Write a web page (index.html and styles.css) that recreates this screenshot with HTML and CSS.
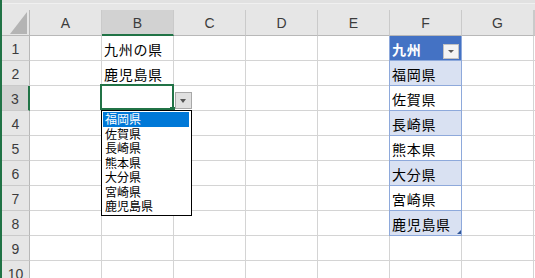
FILE: index.html
```html
<!DOCTYPE html>
<html lang="ja">
<head>
    <meta charset="utf-8">
    <title>九州の県</title>
    <link rel="stylesheet" href="styles.css">
</head>
<body>

<div class="window">
    <div class="edge"></div>
    <div class="sheet">
        <div class="topbar"></div>
        <div class="grid">
            <!-- column headers -->
            <div class="corner">
                <svg width="17" height="22" viewBox="0 0 17 22"><polygon points="17,0 17,22 0,22" fill="#b4b4b4"/></svg>
            </div>
            <div class="colhead">A</div>
            <div class="colhead sel">B</div>
            <div class="colhead">C</div>
            <div class="colhead">D</div>
            <div class="colhead">E</div>
            <div class="colhead">F</div>
            <div class="colhead">G</div>
            <div class="colhead"></div>

            <!-- row 1 -->
            <div class="rowhead">1</div>
            <div class="c"></div>
            <div class="c">九州の県</div>
            <div class="c"></div>
            <div class="c"></div>
            <div class="c"></div>
            <div class="c tbl tblhead">九州<span class="filter"></span></div>
            <div class="c"></div>
            <div class="c"></div>

            <!-- row 2 -->
            <div class="rowhead">2</div>
            <div class="c"></div>
            <div class="c">鹿児島県</div>
            <div class="c"></div>
            <div class="c"></div>
            <div class="c"></div>
            <div class="c tbl band">福岡県</div>
            <div class="c"></div>
            <div class="c"></div>

            <!-- row 3 -->
            <div class="rowhead sel">3</div>
            <div class="c"></div>
            <div class="c active">
                <span class="handle"></span>
                <span class="ddbtn"></span>
                <ul class="ddlist">
                    <li class="on">福岡県</li>
                    <li>佐賀県</li>
                    <li>長崎県</li>
                    <li>熊本県</li>
                    <li>大分県</li>
                    <li>宮崎県</li>
                    <li>鹿児島県</li>
                </ul>
            </div>
            <div class="c"></div>
            <div class="c"></div>
            <div class="c"></div>
            <div class="c tbl">佐賀県</div>
            <div class="c"></div>
            <div class="c"></div>

            <!-- row 4 -->
            <div class="rowhead">4</div>
            <div class="c"></div>
            <div class="c"></div>
            <div class="c"></div>
            <div class="c"></div>
            <div class="c"></div>
            <div class="c tbl band">長崎県</div>
            <div class="c"></div>
            <div class="c"></div>

            <!-- row 5 -->
            <div class="rowhead">5</div>
            <div class="c"></div>
            <div class="c"></div>
            <div class="c"></div>
            <div class="c"></div>
            <div class="c"></div>
            <div class="c tbl">熊本県</div>
            <div class="c"></div>
            <div class="c"></div>

            <!-- row 6 -->
            <div class="rowhead">6</div>
            <div class="c"></div>
            <div class="c"></div>
            <div class="c"></div>
            <div class="c"></div>
            <div class="c"></div>
            <div class="c tbl band">大分県</div>
            <div class="c"></div>
            <div class="c"></div>

            <!-- row 7 -->
            <div class="rowhead">7</div>
            <div class="c"></div>
            <div class="c"></div>
            <div class="c"></div>
            <div class="c"></div>
            <div class="c"></div>
            <div class="c tbl">宮崎県</div>
            <div class="c"></div>
            <div class="c"></div>

            <!-- row 8 -->
            <div class="rowhead">8</div>
            <div class="c"></div>
            <div class="c"></div>
            <div class="c"></div>
            <div class="c"></div>
            <div class="c"></div>
            <div class="c tbl band last">鹿児島県</div>
            <div class="c"></div>
            <div class="c"></div>

            <!-- row 9 -->
            <div class="rowhead">9</div>
            <div class="c"></div>
            <div class="c"></div>
            <div class="c"></div>
            <div class="c"></div>
            <div class="c"></div>
            <div class="c"></div>
            <div class="c"></div>
            <div class="c"></div>

            <!-- row 10 -->
            <div class="rowhead">10</div>
            <div class="c"></div>
            <div class="c"></div>
            <div class="c"></div>
            <div class="c"></div>
            <div class="c"></div>
            <div class="c"></div>
            <div class="c"></div>
            <div class="c"></div>
        </div>
    </div>
</div>

</body>
</html>
```

FILE: styles.css
```css
html, body{
    margin:0;
    padding:0;
    overflow:hidden;
    background:#fff;
}
.window{
    display:flex;
    width:535px;
    height:278px;
    overflow:hidden;
}
.edge{
    width:2px;
    flex:none;
    background:#217346;
}
.sheet{
    flex:1;
    min-width:0;
}
.topbar{
    height:10px;
    background:linear-gradient(#e1e1e1 0 3px, #f0f0f0 3px 4px, #e6e6e6 4px);
}
.grid{
    display:grid;
    grid-template-columns:28px repeat(7, 72px) minmax(0, 1fr);
    grid-template-rows:26px repeat(10, 25px);
}

/* headers */
.corner, .colhead, .rowhead{
    box-sizing:border-box;
    background:#e6e6e6;
    font:14px "Liberation Sans", Arial, sans-serif;
    color:#3c3c3c;
    display:flex;
    align-items:center;
    justify-content:center;
}
.corner{
    border-right:1px solid #b8b8b8;
    border-bottom:1px solid #b8b8b8;
    align-items:flex-end;
    justify-content:flex-end;
    padding:0 2px 1px 0;
}
.colhead{
    border-right:1px solid #cacaca;
    border-bottom:1px solid #b8b8b8;
    padding-top:1px;
}
.colhead.sel{
    background:#d2d2d2;
    border-bottom:2px solid #217346;
}
.rowhead{
    border-right:1px solid #b8b8b8;
    border-bottom:1px solid #cacaca;
    padding-top:1px;
}
.rowhead.sel{
    background:#d2d2d2;
    border-right:2px solid #217346;
}

/* cells */
.c{
    box-sizing:border-box;
    border-right:1px solid #d4d4d4;
    border-bottom:1px solid #d4d4d4;
    font:14px "Noto Sans CJK JP", sans-serif;
    letter-spacing:0.7px;
    color:#000;
    padding:1px 0 0 2px;
    display:flex;
    align-items:center;
    white-space:nowrap;
}

/* table in column F */
.tbl{
    border-right-color:#8ea9db;
    border-bottom-color:#8ea9db;
    box-shadow:-1px 0 0 #8ea9db;
}
.tbl.band{
    background:#d9e1f2;
}
.tblhead{
    position:relative;
    background:#4472c4;
    color:#fff;
    font-weight:bold;
}
.filter{
    position:absolute;
    left:53px;
    top:8px;
    width:16px;
    height:15px;
    box-sizing:border-box;
    border:1px solid #c2c2c2;
    background:#f4f4f4;
}
.filter::after{
    content:"";
    position:absolute;
    left:4px;
    top:5px;
    border-left:3px solid transparent;
    border-right:3px solid transparent;
    border-top:3px solid #5a5a5a;
}
.tbl.last{
    position:relative;
}
.tbl.last::after{
    content:"";
    position:absolute;
    right:0;
    bottom:1px;
    border-left:4px solid transparent;
    border-bottom:4px solid #2f5597;
}

/* active cell with validation list */
.active{
    position:relative;
}
.active::after{
    content:"";
    position:absolute;
    left:-2px;
    top:-2px;
    right:-1px;
    bottom:0;
    border:2px solid #217346;
}
.handle{
    position:absolute;
    left:68px;
    top:21px;
    width:5px;
    height:5px;
    background:#217346;
    z-index:1;
}
.ddbtn{
    position:absolute;
    left:73px;
    top:6px;
    width:17px;
    height:17px;
    box-sizing:border-box;
    border:1px solid #a8a8a8;
    background:#e0e0e0;
}
.ddbtn::after{
    content:"";
    position:absolute;
    left:4px;
    top:6px;
    border-left:3.5px solid transparent;
    border-right:3.5px solid transparent;
    border-top:4px solid #555;
}
.ddlist{
    position:absolute;
    left:-1px;
    top:24px;
    width:91px;
    height:106px;
    box-sizing:border-box;
    margin:0;
    padding:1px 1px 0 1px;
    list-style:none;
    border:1px solid #000;
    background:#fff;
    z-index:2;
}
.ddlist li{
    height:14.5px;
    padding-left:2px;
    font:12px/14.5px "Noto Sans CJK JP", sans-serif;
    letter-spacing:0;
    color:#000;
}
.ddlist li.on{
    background:#0078d7;
    color:#fff;
    margin-right:1px;
}
```
